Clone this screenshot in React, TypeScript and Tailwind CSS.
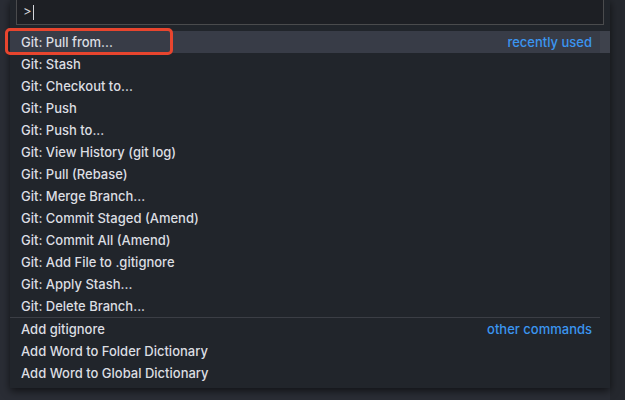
import React from "react";

const gitItems = [
  "Git: Pull from...",
  "Git: Stash",
  "Git: Checkout to...",
  "Git: Push",
  "Git: Push to...",
  "Git: View History (git log)",
  "Git: Pull (Rebase)",
  "Git: Merge Branch...",
  "Git: Commit Staged (Amend)",
  "Git: Commit All (Amend)",
  "Git: Add File to .gitignore",
  "Git: Apply Stash...",
  "Git: Delete Branch...",
];

const otherItems = [
  "Add gitignore",
  "Add Word to Folder Dictionary",
  "Add Word to Global Dictionary",
];

function Row({
  label,
  tag,
  active,
  separator,
}: {
  label: string;
  tag?: string;
  active?: boolean;
  separator?: boolean;
}) {
  return (
    <div
      className={`flex items-center justify-between pl-[11px] pr-[8px] pt-[1px] ${
        active ? "bg-[#383c47]" : ""
      } ${separator ? "border-t border-[#3b3e45] h-[23px]" : "h-[22px]"}`}
    >
      <span className="text-[#dcdee2] font-[450]">{label}</span>
      {tag && <span className="text-[#3b95f0] font-[450]">{tag}</span>}
    </div>
  );
}

export default function App() {
  return (
    <div
      className="relative w-[625px] h-[400px] overflow-hidden bg-[#2a2d35] text-[13px]"
      style={{ fontFamily: "Inter, 'Noto Sans', sans-serif" }}
    >
      <div className="absolute right-0 top-0 w-[15px] h-[400px] bg-[#25282e]" />
      <div className="relative ml-[10px] w-[600px] bg-[#21252b] shadow-[0_3px_8px_rgba(0,0,0,0.6)] pb-[4px]">
        <div className="px-[6px] pb-[6px]">
          <div className="mt-[-1px] h-[26px] border border-[#4a4b4d] bg-[#1d1f24] flex items-center pl-[6px] text-[#d4d6da]">
            <span>&gt;</span>
            <span className="ml-[1px] w-px h-[15px] bg-[#d4d6da]" />
          </div>
        </div>
        <div className="flex">
          <div className="w-[590px]">
            {gitItems.map((g, i) => (
              <Row
                key={g}
                label={g}
                active={i === 0}
                tag={i === 0 ? "recently used" : undefined}
              />
            ))}
            {otherItems.map((g, i) => (
              <Row
                key={g}
                label={g}
                separator={i === 0}
                tag={i === 0 ? "other commands" : undefined}
              />
            ))}
          </div>
          <div className="w-[10px]">
            <div className="h-[22px] bg-[#3e424c]" />
          </div>
        </div>
      </div>
      <div className="absolute left-[5px] top-[28px] w-[168px] h-[27px] border-[3px] border-[#e8452e] rounded-[5px]" />
    </div>
  );
}
